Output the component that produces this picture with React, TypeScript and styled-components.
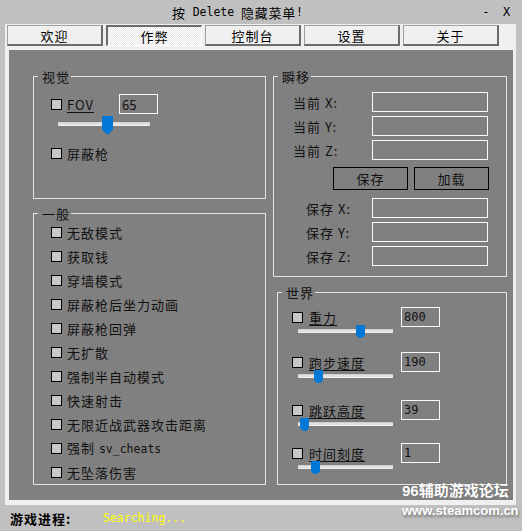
import React from 'react';
import styled, { createGlobalStyle } from 'styled-components';

const SANS = `"Noto Sans CJK SC", "Noto Sans", sans-serif`;
const MONO = `"DejaVu Sans Mono", "Liberation Mono", "Noto Sans CJK SC", monospace`;

const TABS = ['欢迎', '作弊', '控制台', '设置', '关于'];

// second field is a monospace suffix
const GENERAL: [string, string?][] = [
  ['无敌模式'],
  ['获取钱'],
  ['穿墙模式'],
  ['屏蔽枪后坐力动画'],
  ['屏蔽枪回弹'],
  ['无扩散'],
  ['强制半自动模式'],
  ['快速射击'],
  ['无限近战武器攻击距离'],
  ['强制 ', 'sv_cheats'],
  ['无坠落伤害'],
];

const CURRENT = ['X', 'Y', 'Z'];

const WORLD = [
  { label: '重力', value: '800', pos: 0.67, offset: 0 },
  { label: '跑步速度', value: '190', pos: 0.19, offset: 14 },
  { label: '跳跃高度', value: '39', pos: 0.02, offset: 17 },
  { label: '时间刻度', value: '1', pos: 0.15, offset: 12 },
];

const GlobalStyle = createGlobalStyle`
  * { box-sizing: border-box; }
  html, body { margin: 0; padding: 0; background: #c0c0c0; }
  body { font-family: ${SANS}; font-size: 13px; color: #111; }
`;

const Window = styled.div`
  position: relative;
  width: 522px;
  height: 531px;
  display: flex;
  flex-direction: column;
  overflow: hidden;
  background: #c0c0c0;
`;

const TitleBar = styled.div`
  height: 24px;
  display: flex;
  align-items: center;
  padding: 0 11px 0 172px;
  font-size: 13px;
  letter-spacing: 0.7px;
  color: #000;
`;

const Mono = styled.span`
  font-family: ${MONO};
  font-size: 11.5px;
  letter-spacing: 0;
`;

const WindowControls = styled.div`
  margin-left: auto;
  display: flex;
  gap: 13px;
  font-family: ${MONO};
  font-size: 12px;
`;

const Frame = styled.div`
  margin: 0 6px 0 5px;
  height: 481px;
  background: #f0f0f0;
  padding: 1px 0 5px 2px;
  display: flex;
  flex-direction: column;
`;

const TabRow = styled.div`
  display: flex;
  gap: 3px;
  height: 21px;
`;

const Tab = styled.div<{ $active?: boolean }>`
  width: 96px;
  height: 21px;
  display: flex;
  align-items: center;
  justify-content: center;
  font-size: 13px;
  letter-spacing: 1px;
  color: #000;
  border-style: solid;
  border-width: ${(p) => (p.$active ? '2px 1px 1px 2px' : '1px 2px 2px 1px')};
  border-color: ${(p) =>
    p.$active ? '#6b6b6b #ffffff #ffffff #6b6b6b' : '#a0a0a0 #6b6b6b #6b6b6b #a0a0a0'};
  background: ${(p) =>
    p.$active
      ? 'repeating-conic-gradient(#ffffff 0 25%, #e6e6e6 0 50%) 0 0 / 2px 2px'
      : '#f0f0f0'};
`;

const Panel = styled.div`
  flex: 1;
  margin: 4px 3px 0 2px;
  background: #808080;
  display: grid;
  grid-template-columns: 233px 234px;
  column-gap: 7px;
  align-items: start;
  padding: 26px 0 0 24px;
`;

const Column = styled.div`
  display: flex;
  flex-direction: column;
`;

const Group = styled.section<{ $height: number; $top?: number; $indent?: number }>`
  position: relative;
  height: ${(p) => p.$height}px;
  margin-top: ${(p) => p.$top ?? 0}px;
  margin-left: ${(p) => p.$indent ?? 0}px;
  border: 1px solid #e4e4e4;
  display: flex;
  flex-direction: column;
`;

const Legend = styled.span`
  position: absolute;
  top: -9px;
  left: 4px;
  padding: 0 1px 0 4px;
  background: #808080;
  line-height: 17px;
  letter-spacing: 1px;
  color: #111;
`;

const GroupBody = styled.div<{ $pad: string; $gap?: number }>`
  display: flex;
  flex-direction: column;
  padding: ${(p) => p.$pad};
  gap: ${(p) => p.$gap ?? 0}px;
`;

const Row = styled.div<{ $indent?: number; $top?: number }>`
  display: flex;
  align-items: center;
  height: 20px;
  padding-left: ${(p) => p.$indent ?? 0}px;
  margin-top: ${(p) => p.$top ?? 0}px;
`;

const CheckBox = styled.span`
  flex-shrink: 0;
  width: 11px;
  height: 11px;
  border: 1px solid #000;
  background: #c8c8c8;
`;

const Label = styled.span<{ $width?: number; $gap?: number }>`
  flex-shrink: 0;
  width: ${(p) => (p.$width ? `${p.$width}px` : 'auto')};
  margin-left: ${(p) => p.$gap ?? 5}px;
  line-height: 17px;
  letter-spacing: 1px;
  white-space: pre;
  color: #111;

  & > u {
    text-decoration: underline;
    text-underline-offset: 2px;
    text-decoration-thickness: 1px;
  }
`;

const TextBox = styled.div<{ $width: number; $mono?: boolean; $auto?: boolean }>`
  flex-shrink: 0;
  width: ${(p) => p.$width}px;
  height: 20px;
  margin-left: ${(p) => (p.$auto ? 'auto' : '0')};
  border: 1px solid #fafafa;
  display: flex;
  align-items: center;
  padding: 0 2px;
  color: #111;
  font-family: ${(p) => (p.$mono ? MONO : SANS)};
  font-size: ${(p) => (p.$mono ? '12px' : '13px')};
`;

const CoordLabel = styled.span`
  letter-spacing: 1px;
  color: #111;
  white-space: pre;
`;

const ButtonRow = styled.div`
  display: flex;
  justify-content: flex-end;
  gap: 6px;
  margin: 7px -1px 8px 0;
`;

const Button = styled.button`
  width: 75px;
  height: 23px;
  padding: 0;
  border: 1px solid #000;
  background: transparent;
  font-family: ${SANS};
  font-size: 13px;
  letter-spacing: 1px;
  color: #111;
`;

const SliderBox = styled.div<{ $width: number; $height: number; $left: number; $top: number }>`
  position: relative;
  width: ${(p) => p.$width}px;
  height: ${(p) => p.$height}px;
  margin-left: ${(p) => p.$left}px;
  margin-top: ${(p) => p.$top}px;
`;

const Track = styled.div<{ $top: number }>`
  margin-top: ${(p) => p.$top}px;
  height: 4px;
  background: #e2e2e2;
  border-top: 1px solid #d0d0d0;
  border-bottom: 1px solid #eeeeee;
`;

const Thumb = styled.div<{ $kind: 'pointer' | 'round' }>`
  position: absolute;
  top: 0;
  width: ${(p) => (p.$kind === 'pointer' ? 11 : 9)}px;
  height: ${(p) => (p.$kind === 'pointer' ? 19 : 13)}px;
  background: #0078d7;
  clip-path: ${(p) =>
    p.$kind === 'pointer' ? 'polygon(0 0, 100% 0, 100% 72%, 50% 100%, 0 72%)' : 'none'};
  border-radius: ${(p) => (p.$kind === 'round' ? '1px 1px 4.5px 4.5px' : '0')};
`;

const WorldItem = styled.div<{ $top: number }>`
  display: flex;
  flex-direction: column;
  margin-top: ${(p) => p.$top}px;
`;

const StatusBar = styled.div`
  flex: 1;
  display: flex;
  align-items: center;
  padding-left: 10px;
`;

const StatusLabel = styled.span`
  width: 93px;
  font-weight: 700;
  letter-spacing: 1px;
  color: #000;
`;

const StatusValue = styled.span`
  font-family: ${MONO};
  font-size: 11.5px;
  color: #ffff00;
`;

const Watermark = styled.div`
  position: absolute;
  left: 402px;
  top: 481px;
  display: flex;
  flex-direction: column;
  color: #fff;
  font-weight: 700;
  pointer-events: none;
`;

const WatermarkTitle = styled.span`
  font-family: "Liberation Sans", ${SANS};
  font-size: 15px;
  line-height: 20px;
  text-shadow: 0 0 1px rgba(0, 0, 0, 0.3);
`;

const WatermarkUrl = styled.span`
  font-family: "Liberation Sans", sans-serif;
  font-size: 13px;
  line-height: 16px;
  margin-top: 2px;
  text-shadow: 1px 2px 3px rgba(0, 0, 0, 0.45);
`;

type SliderProps = { width: number; pos: number; kind: 'pointer' | 'round'; left: number; top: number };

const Slider = ({ width, pos, kind, left, top }: SliderProps) => {
  const thumb = kind === 'pointer' ? 11 : 9;
  const height = kind === 'pointer' ? 19 : 13;
  return (
    <SliderBox $width={width} $height={height} $left={left} $top={top}>
      <Track $top={kind === 'pointer' ? 6 : 4} />
      <Thumb $kind={kind} style={{ left: Math.round(pos * (width - thumb)) }} />
    </SliderBox>
  );
};

export default function App() {
  return (
    <>
      <GlobalStyle />
      <Window>
        <TitleBar>
          按 <Mono>&nbsp;Delete&nbsp;</Mono> 隐藏菜单<Mono>!</Mono>
          <WindowControls>
            <span>-</span>
            <span>X</span>
          </WindowControls>
        </TitleBar>

        <Frame>
          <TabRow>
            {TABS.map((t) => (
              <Tab key={t} $active={t === '作弊'}>
                {t}
              </Tab>
            ))}
          </TabRow>

          <Panel>
            <Column>
              <Group $height={123}>
                <Legend>视觉</Legend>
                <GroupBody $pad="17px 0 0 17px">
                  <Row>
                    <CheckBox />
                    <Label $width={52}>
                      <u>FOV</u>
                    </Label>
                    <TextBox $width={39}>65</TextBox>
                  </Row>
                  <Slider width={92} pos={0.54} kind="pointer" left={7} top={2} />
                  <Row $top={8}>
                    <CheckBox />
                    <Label>屏蔽枪</Label>
                  </Row>
                </GroupBody>
              </Group>

              <Group $height={272} $top={14}>
                <Legend>一般</Legend>
                <GroupBody $pad="8px 0 0 17px" $gap={4}>
                  {GENERAL.map(([text, code]) => (
                    <Row key={text + (code ?? '')}>
                      <CheckBox />
                      <Label>
                        {text}
                        {code && <Mono>{code}</Mono>}
                      </Label>
                    </Row>
                  ))}
                </GroupBody>
              </Group>
            </Column>

            <Column>
              <Group $height={201}>
                <Legend>瞬移</Legend>
                <GroupBody $pad="15px 18px 0 0" $gap={4}>
                  {CURRENT.map((axis) => (
                    <Row key={axis} $indent={19}>
                      <CoordLabel>当前 {axis}:</CoordLabel>
                      <TextBox $width={116} $auto />
                    </Row>
                  ))}
                </GroupBody>
                <GroupBody $pad="0 18px 0 0">
                  <ButtonRow>
                    <Button>保存</Button>
                    <Button>加载</Button>
                  </ButtonRow>
                </GroupBody>
                <GroupBody $pad="0 18px 0 0" $gap={4}>
                  {CURRENT.map((axis) => (
                    <Row key={axis} $indent={32}>
                      <CoordLabel>保存 {axis}:</CoordLabel>
                      <TextBox $width={116} $auto />
                    </Row>
                  ))}
                </GroupBody>
              </Group>

              <Group $height={193} $top={15} $indent={4}>
                <Legend>世界</Legend>
                <GroupBody $pad="14px 0 0 14px">
                  {WORLD.map((w) => (
                    <WorldItem key={w.label} $top={w.offset}>
                      <Row>
                        <CheckBox />
                        <Label $width={92} $gap={6}>
                          <u>{w.label}</u>
                        </Label>
                        <TextBox $width={39} $mono>
                          {w.value}
                        </TextBox>
                      </Row>
                      <Slider width={95} pos={w.pos} kind="round" left={6} top={-2} />
                    </WorldItem>
                  ))}
                </GroupBody>
              </Group>
            </Column>
          </Panel>
        </Frame>

        <StatusBar>
          <StatusLabel>游戏进程:</StatusLabel>
          <StatusValue>Searching...</StatusValue>
        </StatusBar>

        <Watermark>
          <WatermarkTitle>96辅助游戏论坛</WatermarkTitle>
          <WatermarkUrl>www.steamcom.cn</WatermarkUrl>
        </Watermark>
      </Window>
    </>
  );
}
